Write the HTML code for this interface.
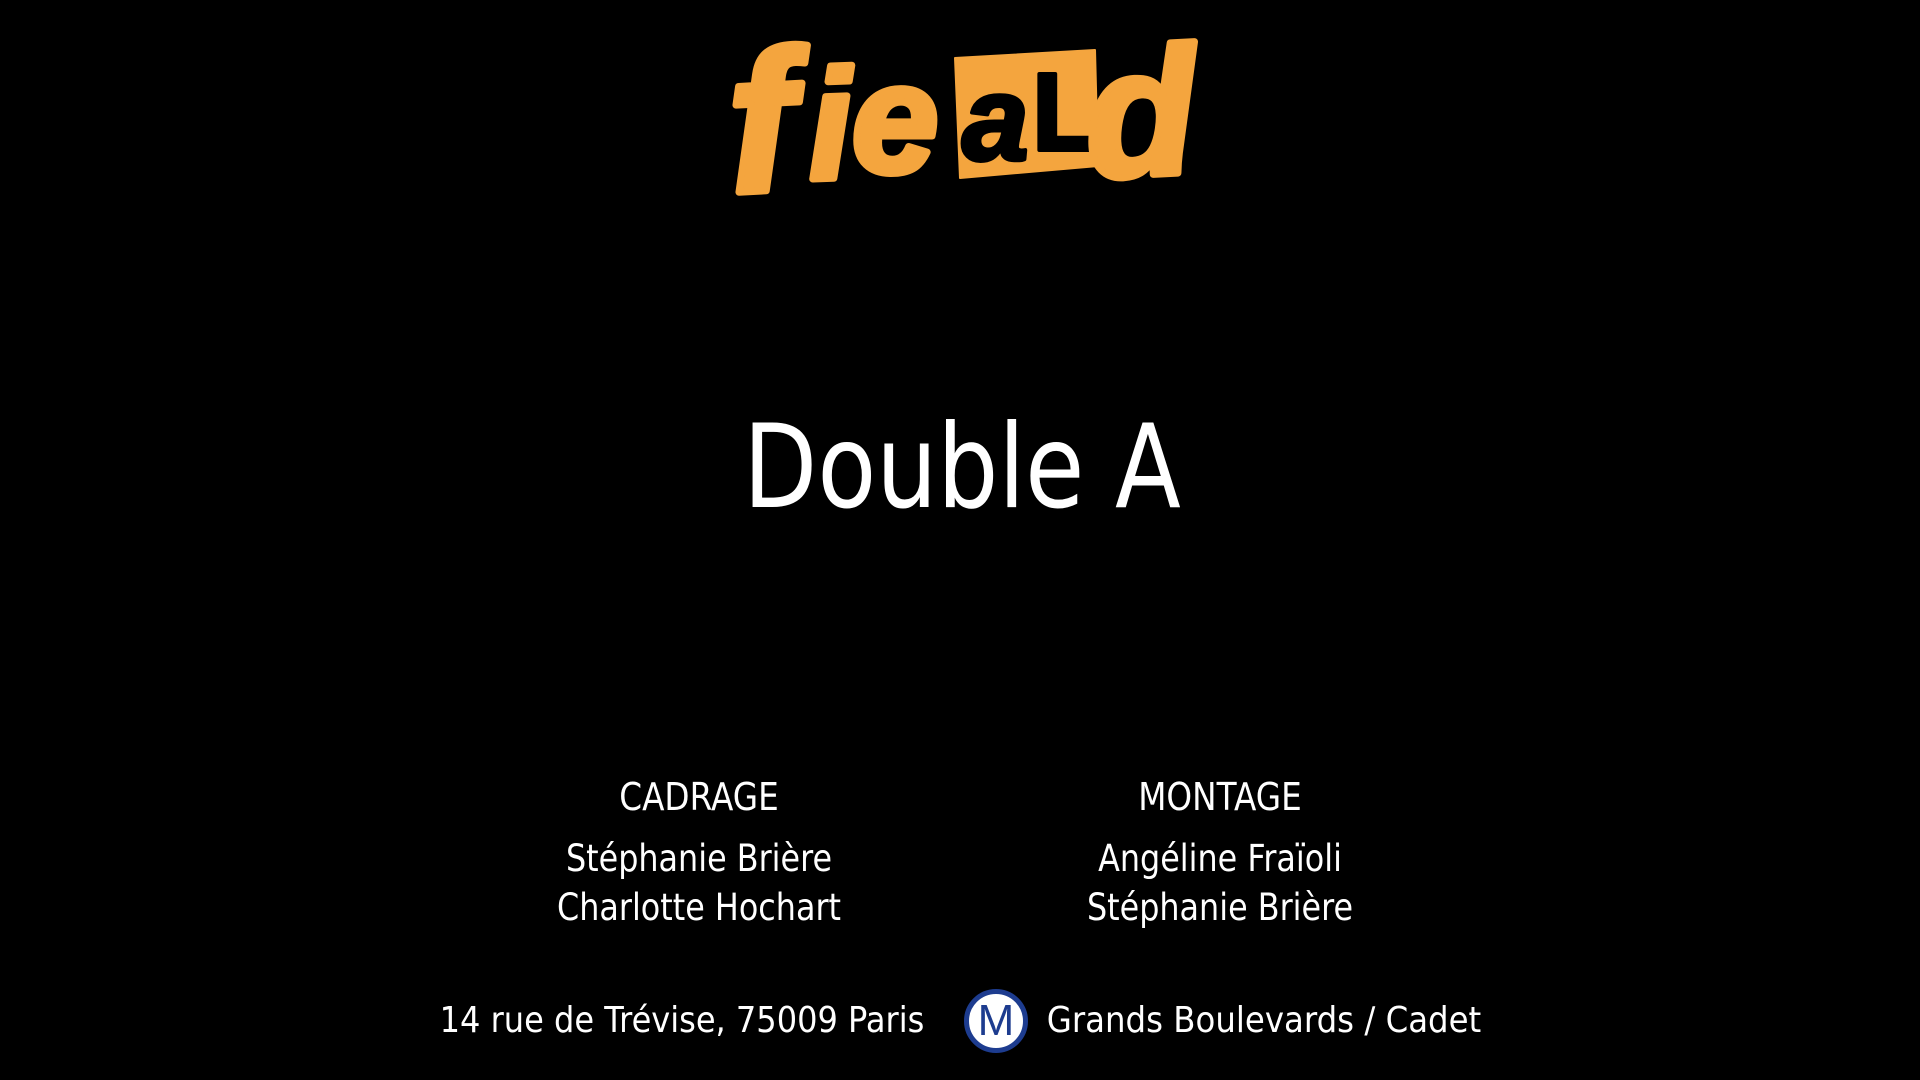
<!DOCTYPE html>
<html><head><meta charset="utf-8"><style>
html,body{margin:0;width:1920px;height:1080px;background:#000;overflow:hidden}
body{font-family:"DejaVu Sans","Liberation Sans",sans-serif;color:#fff;position:relative}
.t{position:absolute;white-space:nowrap;transform:translateX(-50%) scaleX(.86);transform-origin:center;text-align:center;line-height:1}
</style></head><body>
<svg width="1920" height="220" style="position:absolute;left:0;top:0">
<g font-family="Liberation Sans,sans-serif" font-weight="bold" font-style="italic" fill="#f4a53e" stroke="#f4a53e" stroke-width="7" stroke-linejoin="round">
<text x="728" y="190" font-size="200" transform="rotate(-3 780 120)">f</text>
<text x="808" y="178" font-size="155" transform="rotate(-2 840 120)">i</text>
<text x="852" y="172" font-size="155">e</text>
<polygon points="955,58 1095,50 1098,166 960,178" stroke-width="2"/>
<text x="962" y="160" font-size="120" fill="#000" stroke="#000" stroke-width="4">a</text>
<text x="1032" y="150" font-size="110" fill="#000" stroke="#000" stroke-width="4" font-style="normal">L</text>
<text x="1085" y="175" font-size="180" transform="rotate(-3 1140 110)">d</text>
</g>
</svg>
<div class="t" style="left:962px;top:410px;font-size:116px;transform:translateX(-50%) scaleX(.83)">Double A</div>
<div class="t" style="left:699px;top:778px;font-size:38px">CADRAGE</div>
<div class="t" style="left:1220px;top:778px;font-size:38px">MONTAGE</div>
<div class="t" style="left:699px;top:834px;font-size:37px;line-height:49px">Stéphanie Brière<br>Charlotte Hochart</div>
<div class="t" style="left:1220px;top:834px;font-size:37px;line-height:49px">Angéline Fraïoli<br>Stéphanie Brière</div>
<div class="t" style="left:682px;top:1003px;font-size:36px;transform:translateX(-50%) scaleX(.89)">14 rue de Trévise, 75009 Paris</div>
<div style="position:absolute;left:964px;top:989px;width:64px;height:64px;border-radius:50%;background:#fff;border:5px solid #1d3c8f;box-sizing:border-box;color:#1d3c8f;font:44px 'Liberation Sans',sans-serif;text-align:center;line-height:54px">M</div>
<div class="t" style="left:1264px;top:1003px;font-size:36px;transform:translateX(-50%) scaleX(.90)">Grands Boulevards / Cadet</div>
</body></html>
